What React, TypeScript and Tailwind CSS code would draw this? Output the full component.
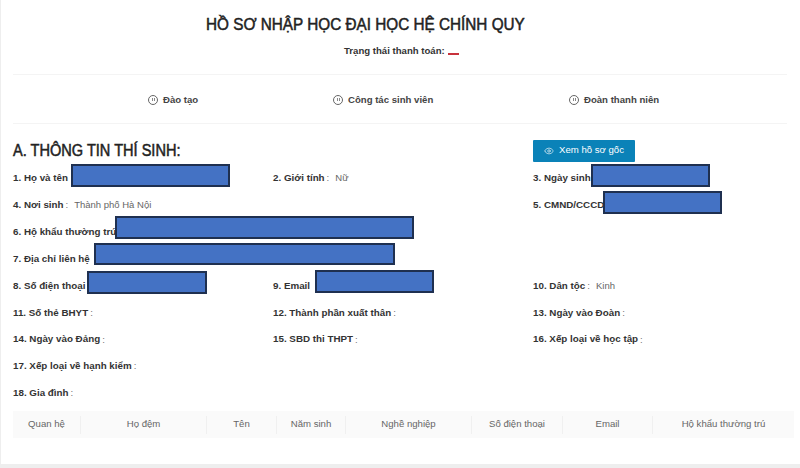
import { Eye } from 'lucide-react'

function Redact({ w, h = 'h-[23px]', ml = 'ml-0', mb = 'mb-[6px]' }: { w: string; h?: string; ml?: string; mb?: string }) {
    return <span className={`${w} ${h} ${ml} ${mb} shrink-0 bg-[#4472c4] border-2 border-[#1f3050]`} />
}

function Field({ label, value, children, span }: { label: string; value?: string; children?: React.ReactNode; span?: string }) {
    return (
        <div className={`flex items-center h-[27px] whitespace-nowrap ${span ?? ''}`}>
            <span className="font-bold text-[#333] text-[9.8px]">{label}</span>
            {!children && <span className="text-[#777] ml-[2px]">:</span>}
            {value && <span className="text-[#666] ml-[6px] text-[9.5px]">{value}</span>}
            {children}
        </div>
    )
}

const tabs = [
    { name: 'Đào tạo', cls: 'w-[320px] pl-[135px]' },
    { name: 'Công tác sinh viên', cls: 'w-[236px]' },
    { name: 'Đoàn thanh niên', cls: 'flex-1' },
]

const cols = [
    { name: 'Quan hệ', cls: 'w-[68px]' },
    { name: 'Họ đệm', cls: 'w-[126px]' },
    { name: 'Tên', cls: 'w-[70px]' },
    { name: 'Năm sinh', cls: 'w-[69px]' },
    { name: 'Nghề nghiệp', cls: 'w-[126px]' },
    { name: 'Số điện thoại', cls: 'w-[91px]' },
    { name: 'Email', cls: 'w-[90px]' },
    { name: 'Hộ khẩu thường trú', cls: 'flex-1' },
]

export default function App() {
    return (
        <div className="w-[800px] h-[468px] overflow-hidden bg-white border-l border-l-[#eeeeee] font-['Liberation_Sans',Arial,sans-serif] text-[9.6px] flex flex-col">
            <div className="flex-1 pl-[12px] pr-[13px]">
                <h1 className="pt-[13px] h-[40px] pl-[193px] text-[16.5px] leading-[22px] font-normal text-[#222] [-webkit-text-stroke:0.5px_#222] whitespace-nowrap">
                    <span className="inline-block origin-left scale-x-[0.927]">HỒ SƠ NHẬP HỌC ĐẠI HỌC HỆ CHÍNH QUY</span>
                </h1>
                <div className="h-[34px] pt-[4px] pl-[331px] font-bold leading-[14px] text-[#333] whitespace-nowrap flex">
                    <span>Trạng thái thanh toán:</span>
                    <span className="ml-[3px] mt-[9px] w-[11px] h-[2px] bg-[#c8323c]" />
                </div>
                <div className="flex items-center h-[50px] pt-[2px] border-y border-[#f4f4f4] font-bold text-[#444]">
                    {tabs.map(t => (
                        <div key={t.name} className={`flex items-center gap-[5px] ${t.cls}`}>
                            <span className="w-[10px] h-[10px] rounded-full border border-[#666] flex items-center justify-center gap-px">
                                <span className="w-px h-[3px] bg-[#888]" />
                                <span className="w-px h-[3px] bg-[#888]" />
                            </span>
                            <span>{t.name}</span>
                        </div>
                    ))}
                </div>
                <div className="flex items-center h-[41px]">
                    <h2 className="w-[520px] text-[16px] font-normal text-[#222] [-webkit-text-stroke:0.5px_#222] whitespace-nowrap pt-[13px]">
                        <span className="inline-block origin-left scale-x-[0.91]">A. THÔNG TIN THÍ SINH:</span>
                    </h2>
                    <button className="w-[102px] h-[22px] mt-[12px] bg-[#0a82b8] rounded-[1px] text-white text-[9.6px] flex items-center justify-center gap-[5px]">
                        <Eye size={10} strokeWidth={1.5} />
                        Xem hồ sơ gốc
                    </button>
                </div>
                <div className="grid grid-cols-[260px_260px_1fr] auto-rows-[26.9px] items-center">
                    <Field label="1. Họ và tên"><Redact w="w-[159px]" ml="ml-[3px]" /></Field>
                    <Field label="2. Giới tính" value="Nữ" />
                    <Field label="3. Ngày sinh"><Redact w="w-[119px]" /></Field>

                    <Field label="4. Nơi sinh" value="Thành phố Hà Nội" span="col-span-2" />
                    <Field label="5. CMND/CCCD"><Redact w="w-[119px]" ml="-ml-px" mb="mb-[5px]" /></Field>

                    <Field label="6. Hộ khẩu thường trú" span="col-span-3"><Redact w="w-[299px]" ml="-ml-px" mb="mb-[10px]" /></Field>
                    <Field label="7. Địa chỉ liên hệ" span="col-span-3"><Redact w="w-[301px]" h="h-[22px]" ml="ml-[4px]" mb="mb-[10px]" /></Field>

                    <Field label="8. Số điện thoại"><Redact w="w-[120px]" ml="ml-[2px]" mb="mb-[7px]" /></Field>
                    <Field label="9. Email"><Redact w="w-[119px]" ml="ml-[5px]" mb="mb-[9px]" /></Field>
                    <Field label="10. Dân tộc" value="Kinh" />

                    <Field label="11. Số thẻ BHYT" />
                    <Field label="12. Thành phần xuất thân" />
                    <Field label="13. Ngày vào Đoàn" />

                    <Field label="14. Ngày vào Đảng" />
                    <Field label="15. SBD thi THPT" />
                    <Field label="16. Xếp loại về học tập" />

                    <Field label="17. Xếp loại về hạnh kiểm" span="col-span-3" />
                    <Field label="18. Gia đình" span="col-span-3" />
                </div>
                <div className="flex items-center h-[27px] mt-[4px] bg-[#fafafa] text-[#666] w-[781px]">
                    {cols.map((c, i) => (
                        <div key={c.name} className={`h-[18px] flex items-center justify-center whitespace-nowrap ${c.cls} ${i < cols.length - 1 ? 'border-r border-[#f0f0f0]' : ''}`}>
                            {c.name}
                        </div>
                    ))}
                </div>
            </div>
            <div className="h-[4px] bg-[#eeeeee]" />
        </div>
    )
}
